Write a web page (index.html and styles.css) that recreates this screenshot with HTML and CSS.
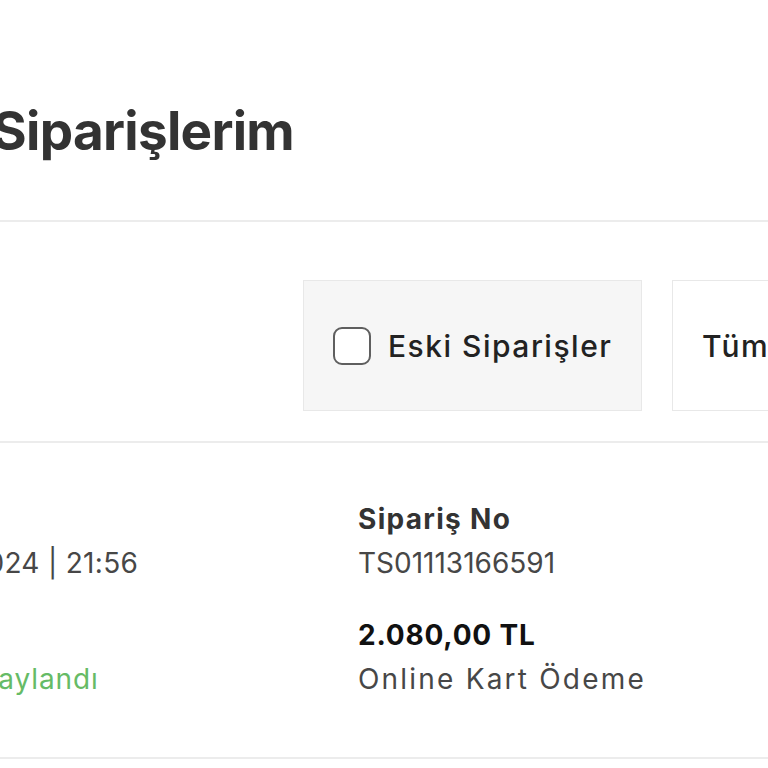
FILE: index.html
```html
<!DOCTYPE html>
<html lang="tr">
<head>
<meta charset="utf-8">
<link rel="stylesheet" href="styles.css">
</head>
<body>
<div class="viewport">
  <header class="page-head">
    <h1 class="title">Siparişlerim</h1>
  </header>
  <section class="filters">
    <label class="filter filter-check">
      <span class="checkbox"></span>
      <span class="filter-text">Eski Siparişler</span>
    </label>
    <div class="filter filter-select">
      <span class="filter-text">Tüm Siparişler</span>
    </div>
  </section>
  <section class="order">
    <div class="order-col order-col-left">
      <div class="field">
        <div class="field-label"></div>
        <div class="field-value date">8 Kasım 2024 | 21:56</div>
      </div>
      <div class="field">
        <div class="field-label"></div>
        <div class="field-value status">Sipariş Onaylandı</div>
      </div>
    </div>
    <div class="order-col order-col-right">
      <div class="field">
        <div class="field-label">Sipariş No</div>
        <div class="field-value order-no">TS01113166591</div>
      </div>
      <div class="field">
        <div class="field-label amount">2.080,00 TL</div>
        <div class="field-value payment">Online Kart Ödeme</div>
      </div>
    </div>
  </section>
</div>
</body>
</html>
```

FILE: styles.css
```css
html, body {
  margin: 0;
  padding: 0;
  background: #ffffff;
}
body {
  width: 768px;
  height: 768px;
  overflow: hidden;
  font-family: "Inter", "Noto Sans", sans-serif;
  color: #333333;
}
.viewport {
  width: 768px;
}
.page-head {
  height: 222px;
  border-bottom: 2px solid #ececec;
  box-sizing: border-box;
  display: flex;
  align-items: flex-start;
}
.title {
  margin: 0;
  margin-left: -8px;
  padding-top: 98px;
  font-size: 53px;
  line-height: 66px;
  letter-spacing: -0.7px;
  font-weight: 700;
  color: #333333;
  white-space: nowrap;
}
.filters {
  display: flex;
  gap: 30px;
  padding: 58px 0 30px 303px;
  border-bottom: 2px solid #ececec;
  white-space: nowrap;
}
.filter {
  flex: none;
  height: 131px;
  box-sizing: border-box;
  border: 1px solid #e8e8e8;
  display: flex;
  align-items: center;
  padding-left: 29px;
}
.filter-check {
  width: 339px;
  background: #f6f6f6;
  gap: 17px;
}
.filter-select {
  width: 340px;
  background: #ffffff;
}
.checkbox {
  width: 38px;
  height: 38px;
  box-sizing: border-box;
  border: 2px solid #5f5f5f;
  border-radius: 9px;
  background: #ffffff;
}
.filter-text {
  font-size: 30px;
  font-weight: 500;
  letter-spacing: 1.5px;
  color: #222222;
}
.order {
  display: grid;
  grid-template-columns: 505px 1fr;
  margin-left: -147px;
  padding-top: 54px;
  height: 316px;
  box-sizing: border-box;
  border-bottom: 2px solid #ececec;
}
.order-col {
  display: flex;
  flex-direction: column;
  gap: 28px;
}
.field-label,
.field-value {
  height: 44px;
  line-height: 44px;
  font-size: 28px;
  white-space: nowrap;
}
.field-label {
  font-weight: 700;
  letter-spacing: 1.3px;
  color: #333333;
}
.field-label.amount {
  letter-spacing: 0.8px;
  color: #111111;
}
.field-value {
  font-weight: 400;
  color: #474747;
}
.field-value.date {
  letter-spacing: 0.3px;
}
.field-value.order-no {
  letter-spacing: 0;
}
.field-value.payment {
  letter-spacing: 2.2px;
}
.field-value.status {
  letter-spacing: 0.9px;
  color: #66bb66;
}
```
